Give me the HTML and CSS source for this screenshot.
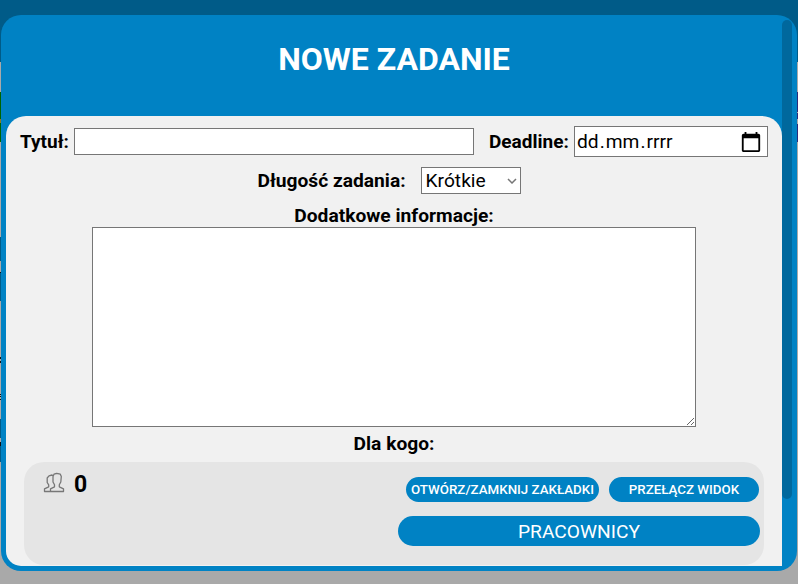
FILE: index.html
```html
<!DOCTYPE html>
<html lang="pl">
<head>
<meta charset="utf-8">
<title>Nowe zadanie</title>
<link rel="stylesheet" href="styles.css">
</head>
<body>
<div class="modal">
  <div class="scroller">
    <header class="header"><h1>NOWE ZADANIE</h1></header>
    <form class="content">
      <div class="row row-main">
        <label for="title">Tytuł:</label>
        <input id="title" class="field title-field" type="text">
        <span class="label deadline-label">Deadline:</span>
        <div class="field date-field"><span class="date-text"><span>dd</span><span>.</span><span>mm</span><span>.</span><span>rrrr</span></span>
          <svg class="calendar" viewBox="0 0 24 24"><path d="M20 3h-1V1h-2v2H7V1H5v2H4c-1.100 0-2 .9-2 2v16c0 1.100.9 2 2 2h16c1.100 0 2-.9 2-2V5c0-1.100-.9-2-2-2zm0 18H4V8h16v13z"/></svg>
        </div>
      </div>
      <div class="row row-length">
        <span class="label">Długość zadania:</span>
        <div class="field select-field"><span>Krótkie</span>
          <svg class="chevron" viewBox="0 0 10 6"><path d="M1 1l4 4 4-4"/></svg>
        </div>
      </div>
      <label class="info-label" for="info">Dodatkowe informacje:</label>
      <textarea id="info" class="info"></textarea>
      <div class="label whom-label">Dla kogo:</div>
      <section class="people">
        <div class="counter">
          <svg class="people-icon" viewBox="0 0 22 22"><path d="M7.500 19.500H1.500v-2.700l4.200-2v-2L4.200 10.500V6L6 3.800l3-.8 1 .8M7.500 19.500v-2.700l4-2v-2L10 10V4.500L11 2.200l2.700-.9 3.600.9 1 2.300-.5 5.500-1.500 2.800v2l4.200 2v2.700z"/></svg>
          <span>0</span>
        </div>
        <div class="actions">
          <div class="toggles">
            <button type="button" class="pill tabs-button">OTWÓRZ/ZAMKNIJ ZAKŁADKI</button>
            <button type="button" class="pill view-button">PRZEŁĄCZ WIDOK</button>
          </div>
          <button type="button" class="pill staff-button">PRACOWNICY</button>
        </div>
      </section>
    </form>
  </div>
  <div class="track"><div class="thumb"></div></div>
</div>
</body>
</html>
```

FILE: styles.css
```css
* { box-sizing: border-box; }
body {
  margin: 0;
  height: 584px;
  padding: 15px 1px 13px;
  overflow: hidden;
  font-family: Roboto, sans-serif;
  font-size: 19.2px;
  color: #000;
  background:
    linear-gradient(#005b88 62px, #a9a9a9 62px 92px, #006400 92px 119px, #8a7a20 119px 123px, #006400 123px 142px, #a9a9a9 142px 237px, #005b88 237px 261px, #a9a9a9 261px 272px, #111 272px 273px, #005b88 273px 301px, #a9a9a9 301px 357px, #111 357px 359px, #a9a9a9 359px 361px, #111 361px 363px, #a9a9a9 363px 394px, #111 394px 395px, #a9a9a9 395px 396px, #111 396px 397px, #a9a9a9 397px 399px, #111 399px 400px, #a9a9a9 400px 419px, #005b88 419px 438px, #a9a9a9 438px 442px, #111 442px 446px, #005b88 446px 462px, #a9a9a9 462px) 0 0 / 1px 100% no-repeat,
    linear-gradient(#005b88 62px, #a9a9a9 62px 92px, #2e2a78 92px 112px, #a9a9a9 112px 113px, #2e2a78 113px 119px, #a9a9a9 119px 124px, #2e2a78 124px 142px, #a9a9a9 142px) 797px 0 / 1px 100% no-repeat,
    linear-gradient(#005b88 62px, #a9a9a9 62px);
}
.modal {
  display: flex;
  height: 556px;
  padding: 5px;
  border-radius: 20px;
  background: #0082c4;
}
.scroller {
  width: 776px;
  height: 546px;
  overflow: hidden;
  border-radius: 15px 0 0 15px;
}
.track { width: 10px; }
.thumb { height: 479px; border-radius: 5px; background: #00689d; }
.header { height: 96px; padding-top: 20px; color: #fff; text-align: center; }
h1 { margin: 0; font-size: 32px; line-height: 38px; font-weight: 700; }
.content {
  height: 450px;
  padding: 10px 14px 0;
  border-radius: 20px 20px 0 0;
  background: #f1f1f1;
}
label, .label { font-weight: 700; white-space: nowrap; }
.field {
  border: 1px solid #767676;
  border-radius: 0;
  background: #fff;
  font: 400 19.2px Roboto, sans-serif;
}
.row { display: flex; align-items: center; }
.row-main { height: 31px; }
.row-main label, .deadline-label { width: 54px; font-size: 19px; }
.title-field { width: 400px; height: 27px; padding: 1px 2px; }
.row-main .deadline-label { width: 85px; margin-left: 15px; }
.date-field { display: flex; align-items: center; width: 194px; height: 31px; padding: 0 5px 0 2px; justify-content: space-between; }
.date-text { display: flex; gap: 1px; }
.calendar { width: 22px; height: 22px; }
.row-length { height: 27px; margin-top: 10px; justify-content: center; gap: 15px; margin-right: 10px; }
.select-field { display: flex; align-items: center; justify-content: space-between; width: 100px; height: 27px; padding: 0 3px 0 4px; }
.chevron { width: 10px; height: 6px; fill: none; stroke: #767676; stroke-width: 1.5; }
.info-label { display: block; margin-top: 11px; height: 22px; line-height: 22px; text-align: center; }
.info {
  display: block;
  width: 604px;
  height: 200px;
  margin: 0 auto;
  border: 1px solid #767676;
  background: #fff;
}
.whom-label { margin-top: 5px; height: 24px; line-height: 24px; text-align: center; }
.people {
  display: flex;
  justify-content: space-between;
  width: 740px;
  height: 103px;
  margin: 6px auto 0 4px;
  padding: 8px 4px 0 19px;
  border-radius: 20px;
  background: #e5e5e5;
}
.counter { display: flex; height: 28px; align-items: center; gap: 9px; font-size: 23px; font-weight: 700; }
.people-icon { width: 22px; height: 22px; margin-top: -2px; fill: none; stroke: #777; stroke-width: 1.3; stroke-linejoin: round; }
.actions { display: flex; flex-direction: column; align-items: flex-end; gap: 14px; padding-top: 7px; }
.toggles { display: flex; gap: 10px; margin-right: 1px; }
.pill { border: 0; padding: 0; color: #fff; background: #0082c4; font-family: Roboto, sans-serif; white-space: nowrap; border-radius: 15px; }
.tabs-button { width: 193px; height: 25px; font-size: 13.333px; font-weight: 500; }
.view-button { width: 150px; height: 25px; font-size: 13.333px; font-weight: 500; }
.staff-button { width: 362px; height: 30px; padding-top: 1px; font-size: 19.2px; }
```
